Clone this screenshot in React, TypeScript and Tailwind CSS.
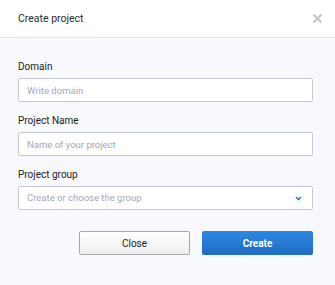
export default function App() {
  return (
    <div className="w-[335px] h-[285px] bg-[#f8f9fc] font-['Roboto',sans-serif] text-[#222]">
      {/* Header */}
      <div className="h-[38px] bg-white border-b border-[#e1e4ee] flex items-center justify-between pl-[18px] pr-[12px]">
        <span className="text-[10.5px] text-[#2b2b2b]">Create project</span>
        <button className="w-[12px] h-[12px] flex items-center justify-center">
          <svg width="11" height="11" viewBox="0 0 11 11">
            <path d="M1.5 1.5L9.5 9.5M9.5 1.5L1.5 9.5" stroke="#c6c6c6" strokeWidth="2.2" />
          </svg>
        </button>
      </div>

      {/* Body */}
      <div className="pl-[18px] pr-[22px] pt-[22px] flex flex-col gap-[12px]">
        <Field label="Domain" placeholder="Write domain" />
        <Field label="Project Name" placeholder="Name of your project" />
        <div>
          <div className="text-[10px] leading-[14px] mb-[4px]">Project group</div>
          <div className="h-[24px] bg-white border border-[#c4c7d6] rounded-[2px] flex items-center justify-between pl-[8px] pr-[10px]">
            <span className="text-[9.5px] text-[#a3a7ba]">Create or choose the group</span>
            <svg width="7" height="5" viewBox="0 0 7 5">
              <path d="M1 1L3.5 3.5L6 1" stroke="#2a78d2" strokeWidth="1.6" fill="none" />
            </svg>
          </div>
        </div>
      </div>

      {/* Actions */}
      <div className="flex justify-end gap-[12px] pr-[22px] mt-[21px]">
        <button className="w-[111px] h-[24px] rounded-[2px] border border-[#a9a9a9] bg-gradient-to-b from-white to-[#eeeeee] text-[10px] text-[#222]">
          Close
        </button>
        <button className="w-[111px] h-[24px] rounded-[2px] bg-gradient-to-b from-[#2f88de] to-[#1d6cc4] text-[10px] font-bold text-white">
          Create
        </button>
      </div>
    </div>
  );
}

function Field({ label, placeholder }: { label: string; placeholder: string }) {
  return (
    <div>
      <div className="text-[10px] leading-[14px] mb-[4px]">{label}</div>
      <input
        placeholder={placeholder}
        className="block w-full h-[24px] bg-white border border-[#c4c7d6] rounded-[2px] px-[8px] text-[9.5px] outline-none placeholder:text-[#a3a7ba]"
      />
    </div>
  );
}
